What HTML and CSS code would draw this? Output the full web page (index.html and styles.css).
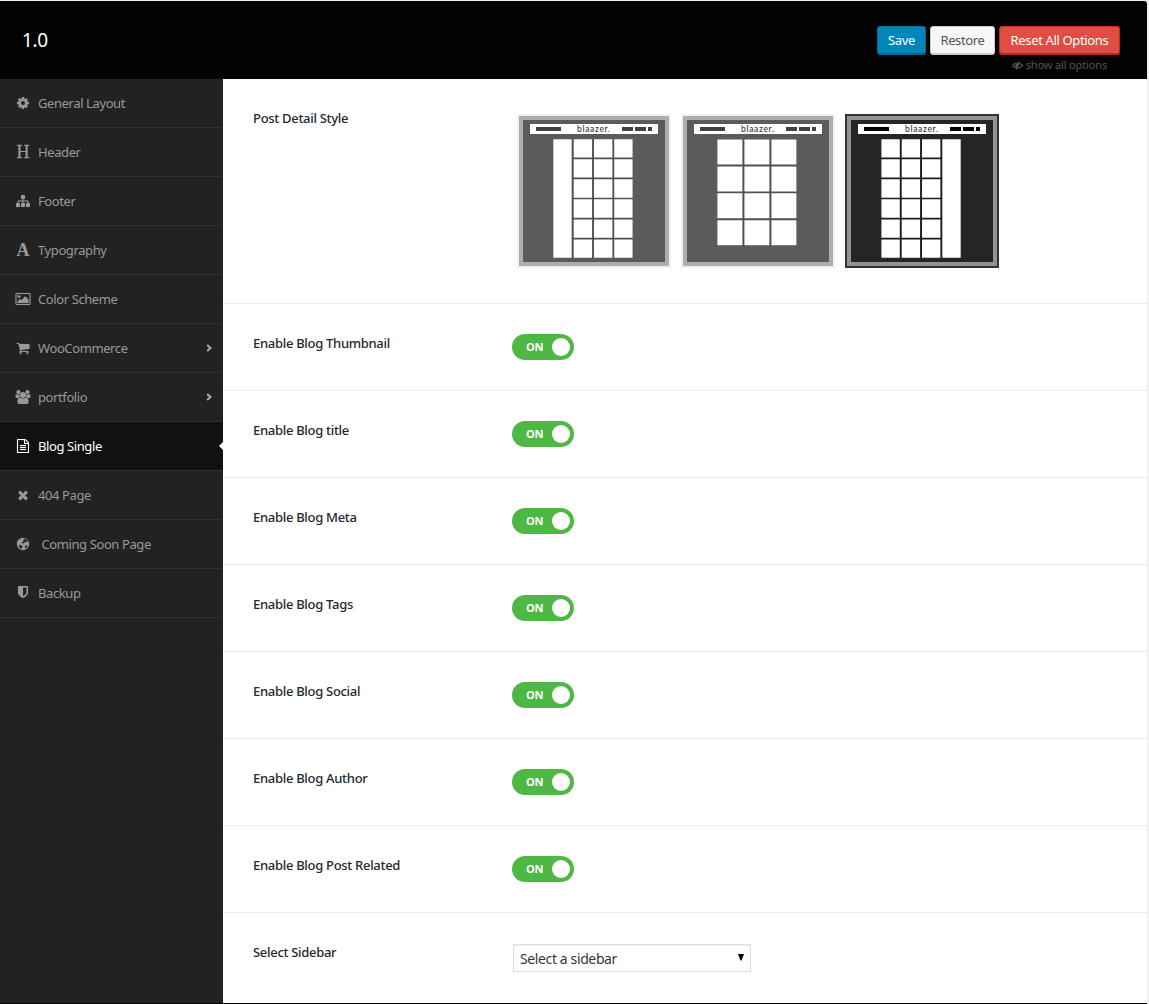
FILE: index.html
```
<!DOCTYPE html>
<html lang="en">
<head>
<meta charset="utf-8">
<title>Theme Options</title>
<link rel="stylesheet" href="styles.css">
</head>
<body>
<div class="panel">
  <header class="header">
    <h2 class="version">1.0</h2>
    <div class="actions">
      <div class="buttons">
        <button class="btn save">Save</button>
        <button class="btn restore">Restore</button>
        <button class="btn reset">Reset All Options</button>
      </div>
      <a class="show-all"><svg class="eye" viewBox="0 0 12 10"><path d="M.6 5.2C3 1.2 8.600 1.200 11.400 5.200C8.600 9 3.400 9 .6 5.200z" fill="none" stroke="currentColor" stroke-width="1.300"/><path d="M3.800 3C3 5.500 4 7.200 5.200 7.500L7.600 3z" fill="currentColor"/><path d="M8.500.5L4.500 9.500" stroke="currentColor" stroke-width="1.300"/></svg><span>show all options</span></a>
    </div>
  </header>
  <div class="main">
    <nav class="menu">
      <a class="item"><svg class="icon" viewBox="0 0 1792 1792"><path d="M1152 896q0-106-75-181t-181-75-181 75-75 181 75 181 181 75 181-75 75-181zm512-109v222q0 12-8 23t-20 13l-185 28q-19 54-39 91 35 50 107 138 10 12 10 25t-9 23q-27 37-99 108t-94 71q-12 0-26-9l-138-108q-44 23-91 38-16 136-29 186-7 28-36 28h-222q-14 0-24.500-8.500t-11.500-21.500l-28-184q-49-16-90-37l-141 107q-10 9-25 9-14 0-25-11-126-114-165-168-7-10-7-23 0-12 8-23 15-21 51-66.500t54-70.500q-27-50-41-99l-183-27q-13-2-21-12.500t-8-23.500v-222q0-12 8-23t19-13l186-28q14-46 39-92-40-57-107-138-10-12-10-24 0-10 9-23 26-36 98.500-107.500t94.500-71.500q13 0 26 10l138 107q44-23 91-38 16-136 29-186 7-28 36-28h222q14 0 24.500 8.500t11.500 21.500l28 184q49 16 90 37l142-107q9-9 24-9 13 0 25 10 129 119 165 170 7 8 7 22 0 12-8 23-15 21-51 66.500t-54 70.500q26 50 41 98l183 28q13 2 21 12.500t8 23.500z"/></svg><span>General Layout</span></a>
      <a class="item"><i class="icon glyph">H</i><span>Header</span></a>
      <a class="item"><svg class="icon" viewBox="0 0 1792 1792"><path d="M1792 1248v320q0 40-28 68t-68 28h-320q-40 0-68-28t-28-68v-320q0-40 28-68t68-28h96v-192h-512v192h96q40 0 68 28t28 68v320q0 40-28 68t-68 28h-320q-40 0-68-28t-28-68v-320q0-40 28-68t68-28h96v-192h-512v192h96q40 0 68 28t28 68v320q0 40-28 68t-68 28h-320q-40 0-68-28t-28-68v-320q0-40 28-68t68-28h96v-192q0-52 38-90t90-38h512v-192h-96q-40 0-68-28t-28-68v-320q0-40 28-68t68-28h320q40 0 68 28t28 68v320q0 40-28 68t-68 28h-96v192h512q52 0 90 38t38 90v192h96q40 0 68 28t28 68z"/></svg><span>Footer</span></a>
      <a class="item"><i class="icon glyph bold">A</i><span>Typography</span></a>
      <a class="item"><svg class="icon wide" viewBox="-64 0 1920 1792"><path d="M576 576q0 80-56 136t-136 56-136-56-56-136 56-136 136-56 136 56 56 136zm1024 384v448h-1408v-192l320-320 160 160 512-512zm96-704h-1600q-13 0-22.500 9.500t-9.500 22.500v1216q0 13 9.500 22.500t22.500 9.500h1600q13 0 22.500-9.500t9.500-22.500v-1216q0-13-9.500-22.500t-22.500-9.500zm160 32v1216q0 66-47 113t-113 47h-1600q-66 0-113-47t-47-113v-1216q0-66 47-113t113-47h1600q66 0 113 47t47 113z"/></svg><span>Color Scheme</span></a>
      <a class="item"><svg class="icon" viewBox="0 0 1792 1792"><path d="M704 1536q0 52-38 90t-90 38-90-38-38-90 38-90 90-38 90 38 38 90zm896 0q0 52-38 90t-90 38-90-38-38-90 38-90 90-38 90 38 38 90zm128-1088v512q0 24-16.500 42.500t-40.500 21.500l-1044 122q13 60 13 70 0 16-24 64h920q26 0 45 19t19 45-19 45-45 19h-1024q-26 0-45-19t-19-45q0-11 8-31.500t16-36 21.500-40 15.500-29.500l-177-823h-204q-26 0-45-19t-19-45 19-45 45-19h256q16 0 28.500 6.500t19.500 15.500 13 24.500 8 26 5.500 29.500 4.500 26h1201q26 0 45 19t19 45z"/></svg><span>WooCommerce</span><svg class="chevron" viewBox="0 0 6 8"><path d="M1.200.9L4.500 4L1.200 7.100"/></svg></a>
      <a class="item"><svg class="icon wide" viewBox="0 0 1920 1792"><path d="M593 896q-162 5-265 128h-134q-82 0-138-40.500t-56-118.500q0-353 124-353 6 0 43.500 21t97.500 42.500 119 21.500q67 0 133-23-5 37-5 66 0 139 81 256zm1071 637q0 120-73 189.500t-194 69.500h-874q-121 0-194-69.500t-73-189.500q0-53 3.500-103.500t14-109 26.500-108.500 43-97.500 62-81 85.500-53.500 111.500-20q10 0 43 21.500t73 48 107 48 135 21.500 135-21.500 107-48 73-48 43-21.500q61 0 111.500 20t85.500 53.500 62 81 43 97.500 26.500 108.500 14 109 3.500 103.500zm-1024-1277q0 106-75 181t-181 75-181-75-75-181 75-181 181-75 181 75 75 181zm704 384q0 159-112.500 271.500t-271.500 112.500-271.500-112.500-112.500-271.500 112.500-271.500 271.500-112.500 271.500 112.500 112.500 271.500zm576 225q0 78-56 118.500t-138 40.500h-134q-103-123-265-128 81-117 81-256 0-29-5-66 66 23 133 23 59 0 119-21.500t97.500-42.500 43.500-21q124 0 124 353zm-128-609q0 106-75 181t-181 75-181-75-75-181 75-181 181-75 181 75 75 181z"/></svg><span>portfolio</span><svg class="chevron" viewBox="0 0 6 8"><path d="M1.200.9L4.500 4L1.200 7.100"/></svg></a>
      <a class="item active"><svg class="icon" viewBox="0 0 1792 1792"><path d="M1596 380q28 28 48 76t20 88v1152q0 40-28 68t-68 28h-1344q-40 0-68-28t-28-68v-1600q0-40 28-68t68-28h896q40 0 88 20t76 48zm-444-244v376h376q-10-29-22-41l-313-313q-12-12-41-22zm384 1528v-1024h-416q-40 0-68-28t-28-68v-416h-768v1536h1280zm-1024-864q0-14 9-23t23-9h704q14 0 23 9t9 23v64q0 14-9 23t-23 9h-704q-14 0-23-9t-9-23v-64zm736 224q14 0 23 9t9 23v64q0 14-9 23t-23 9h-704q-14 0-23-9t-9-23v-64q0-14 9-23t23-9h704zm0 256q14 0 23 9t9 23v64q0 14-9 23t-23 9h-704q-14 0-23-9t-9-23v-64q0-14 9-23t23-9h704z"/></svg><span>Blog Single</span></a>
      <a class="item"><svg class="icon" viewBox="0 0 1792 1792"><path d="M1490 1322q0 40-28 68l-136 136q-28 28-68 28t-68-28l-294-294-294 294q-28 28-68 28t-68-28l-136-136q-28-28-28-68t28-68l294-294-294-294q-28-28-28-68t28-68l136-136q28-28 68-28t68 28l294 294 294-294q28-28 68-28t68 28l136 136q28 28 28 68t-28 68l-294 294 294 294q28 28 28 68z"/></svg><span>404 Page</span></a>
      <a class="item"><svg class="icon" viewBox="0 0 14 14"><circle cx="7" cy="7" r="6.200"/><path class="sea" d="M7.500 2.300l1.700-.8 1.900 1.400 1 2-.9.300-1-.8-1.100 1.200-1.500.1-.4 1.100-1.400-.5.500-1.400 1.200-.9zM3.200 7.700l1.700.4 1.500 1.300-.3 1.300-.8 1.300-1.700-1.200-.6-1.600zM9.600 8.200l1.900.2-.2 1.500-1.400 1.600-.9-.5.200-1.400z"/></svg><span class="indent">Coming Soon Page</span></a>
      <a class="item"><svg class="icon raised" viewBox="0 0 1792 1792"><path d="M1344 960v-640h-448v1137q119-63 213-137 235-184 235-360zm192-768v768q0 86-33.500 170.500t-83 150-118 127.500-126.500 103-121 77.500-89.500 49.500-42.500 20q-12 6-26 6t-26-6q-16-7-42.500-20t-89.500-49.500-121-77.500-126.500-103-118-127.500-83-150-33.500-170.500v-768q0-26 19-45t45-19h1152q26 0 45 19t19 45z"/></svg><span>Backup</span></a>
    </nav>
    <section class="content">
      <div class="row tall">
        <div class="label">Post Detail Style</div>
        <div class="styles">
          <svg class="thumb" viewBox="0 0 150 150">
            <rect class="frame" width="150" height="150"/><rect class="bg" x="4" y="4" width="142" height="142"/>
            <rect class="cell" x="11" y="8" width="128" height="10"/>
            <path class="bar" d="M17 11h25v4H17zM103 11h11v4h-11zM116 11h11v4h-11zM129 11h4v4h-4z"/>
            <text x="58" y="16" textLength="33">blaazer.</text>
            <path class="gap" d="M34 23h80v119H34z"/>
            <path class="cell" d="M34.300 23.300h18.400v118.400H34.300z"/>
            <path class="col" d="M63.900 23.300v118.400M84.200 23.300v118.400M104.400 23.300v118.400"/>
          </svg>
          <svg class="thumb" viewBox="0 0 150 150">
            <rect class="frame" width="150" height="150"/><rect class="bg" x="4" y="4" width="142" height="142"/>
            <rect class="cell" x="11" y="8" width="128" height="10"/>
            <path class="bar" d="M17 11h25v4H17zM103 11h11v4h-11zM116 11h11v4h-11zM129 11h4v4h-4z"/>
            <text x="58" y="16" textLength="33">blaazer.</text>
            <path class="gap" d="M34 23h80v107H34z"/>
            <path class="col large" d="M46.900 23.500v106M73.900 23.500v106M100.900 23.500v106"/>
          </svg>
          <svg class="thumb selected" viewBox="0 0 150 150">
            <rect class="frame" width="150" height="150"/><rect class="bg" x="4" y="4" width="142" height="142"/>
            <rect class="cell" x="11" y="8" width="128" height="10"/>
            <path class="bar" d="M17 11h25v4H17zM103 11h11v4h-11zM116 11h11v4h-11zM129 11h4v4h-4z"/>
            <text x="58" y="16" textLength="33">blaazer.</text>
            <path class="gap" d="M34 23h80v119H34z"/>
            <path class="cell" d="M95.300 23.300h18.400v118.400H95.300z"/>
            <path class="col" d="M43.600 23.300v118.400M63.900 23.300v118.400M84.200 23.300v118.400"/>
          </svg>
        </div>
      </div>
      <div class="row"><div class="label">Enable Blog Thumbnail</div><div class="switch"><span>ON</span><i></i></div></div>
      <div class="row"><div class="label">Enable Blog title</div><div class="switch"><span>ON</span><i></i></div></div>
      <div class="row"><div class="label">Enable Blog Meta</div><div class="switch"><span>ON</span><i></i></div></div>
      <div class="row"><div class="label">Enable Blog Tags</div><div class="switch"><span>ON</span><i></i></div></div>
      <div class="row"><div class="label">Enable Blog Social</div><div class="switch"><span>ON</span><i></i></div></div>
      <div class="row"><div class="label">Enable Blog Author</div><div class="switch"><span>ON</span><i></i></div></div>
      <div class="row"><div class="label">Enable Blog Post Related</div><div class="switch"><span>ON</span><i></i></div></div>
      <div class="row last"><div class="label">Select Sidebar</div><div class="select"><span>Select a sidebar</span><svg viewBox="0 0 6 7"><path d="M0 0h6L3.500 6.500h-1z"/></svg></div></div>
    </section>
  </div>
</div>
</body>
</html>
```
FILE: styles.css
```
* { box-sizing: border-box; }
body {
  margin: 0;
  height: 1004px;
  padding: 1px 2px 0 0;
  overflow: hidden;
  background: #f1f1f1;
  font: 13px/20px "Noto Sans", "Open Sans", sans-serif;
  letter-spacing: -0.4px;
}
.panel {
  display: flex;
  flex-direction: column;
  height: 1003px;
  border-bottom: 1px solid #000;
  border-radius: 0 3px 0 0;
  overflow: hidden;
}
.header {
  flex: none;
  display: flex;
  justify-content: space-between;
  height: 78px;
  padding: 25px 27px 0 22px;
  background: #030303;
}
.version { margin: 0; color: #fff; font-size: 19px; font-weight: 400; line-height: 28px; }
.actions { display: flex; flex-direction: column; align-items: flex-end; }
.buttons { display: flex; gap: 4px; }
.btn {
  height: 29px;
  padding: 0 0 1px;
  border: 1px solid;
  border-radius: 3px;
  font: inherit;
  line-height: 26px;
  letter-spacing: -0.35px;
  white-space: nowrap;
}
.save { width: 49px; color: #fff; background: #0085ba; border-color: #0073aa #006799 #006799; box-shadow: inset 0 -1px #006799; }
.restore { width: 65px; color: #555; background: #f7f7f7; border-color: #ccc; box-shadow: inset 0 -1px #ccc; }
.reset { width: 121px; color: #fff; background: #e14d43; border-color: #d02c21 #ba281e #ba281e; box-shadow: inset 0 -1px #ba281e; }
.show-all { display: flex; align-items: center; gap: 3px; margin-right: 13px; color: #555; font-size: 11px; line-height: 20px; letter-spacing: -0.15px; }
.eye { width: 11px; height: 9px; }
.main { flex: 1; display: flex; min-height: 0; }
.menu { flex: none; width: 223px; background: #222; }
.item {
  position: relative;
  display: flex;
  align-items: center;
  height: 49px;
  padding-left: 15px;
  border-bottom: 1px solid #303030;
  color: #999;
}
.icon { flex: none; width: 14px; height: 14px; margin: 0 8px 0 1px; fill: currentColor; stroke: currentColor; stroke-width: 20; }
.icon[viewBox="0 0 14 14"] { stroke: none; }
.icon.wide { width: 16px; height: 14px; margin: 0 7px 0 0; }
.icon.raised { margin-bottom: 2px; }
.glyph {
  display: flex;
  justify-content: center;
  font: 400 18px/14px "Liberation Serif", serif;
  letter-spacing: 0;
  -webkit-text-stroke: .3px currentColor;
}
.glyph.bold { font-weight: 700; font-size: 18px; -webkit-text-stroke: 0; }
.sea { fill: #2c2c2c; }
.indent { padding-left: 3.500px; }
.chevron { width: 6px; height: 8px; margin: 0 11px 0 auto; fill: none; stroke: #aaa; stroke-width: 2; }
.active { background: #111; color: #fff; }
.active::after {
  content: "";
  position: absolute;
  right: 0;
  top: 20px;
  border: 4px solid transparent;
  border-right-color: #fff;
  border-left-width: 0;
}
.content { flex: 1; background: #fff; }
.row {
  display: grid;
  grid-template-columns: 259px 1fr;
  align-items: start;
  height: 87px;
  padding: 30px 0 0 30px;
  border-bottom: 1px solid #ececec;
  color: #23282d;
}
.row.last { border: 0; }
.row.tall { height: 225px; padding-top: 29px; }
.label { font-weight: 500; line-height: 18px; letter-spacing: -0.3px; }
.tall .label { line-height: 20px; }
.styles { display: flex; gap: 10px; padding: 6px 0 0 5px; }
.thumb { width: 154px; height: 154px; border: 2px solid #f1f1f1; }
.frame { fill: #adadad; }
.bg { fill: #5b5b5b; }
.bar { fill: #424242; }
.gap { fill: #505050; }
.cell { fill: #fff; }
.col { stroke: #fff; stroke-width: 18.400; stroke-dasharray: 18.300 1.720; }
.col.large { stroke-width: 25; stroke-dasharray: 25 1.900; }
.thumb text { font: 500 8.500px Lato, sans-serif; letter-spacing: 0; fill: #333; }
.selected { border-color: #333; }
.selected .frame { fill: #929292; }
.selected .bg { fill: #252525; }
.selected .bar { fill: #000; }
.selected .gap { fill: #1b1b1b; }
.switch {
  display: flex;
  align-items: center;
  justify-content: space-between;
  width: 62px;
  height: 26px;
  padding: 0 4px 0 14px;
  border-radius: 13px;
  background: #4fb845;
  color: #fff;
  font: 700 11px/26px "Open Sans", sans-serif;
  letter-spacing: -0.2px;
}
.switch i { width: 18px; height: 18px; border-radius: 50%; background: #fff; }
.select {
  display: flex;
  align-items: center;
  justify-content: space-between;
  width: 238px;
  height: 28px;
  margin: 1px 0 0 1px;
  padding: 1px 6px 0;
  border: 1px solid #ddd;
  box-shadow: inset 0 1px 2px rgba(0, 0, 0, .07);
  color: #32373c;
  font-size: 14px;
  letter-spacing: -0.38px;
}
.select svg { width: 6px; height: 7px; margin-bottom: 3px; }
```
